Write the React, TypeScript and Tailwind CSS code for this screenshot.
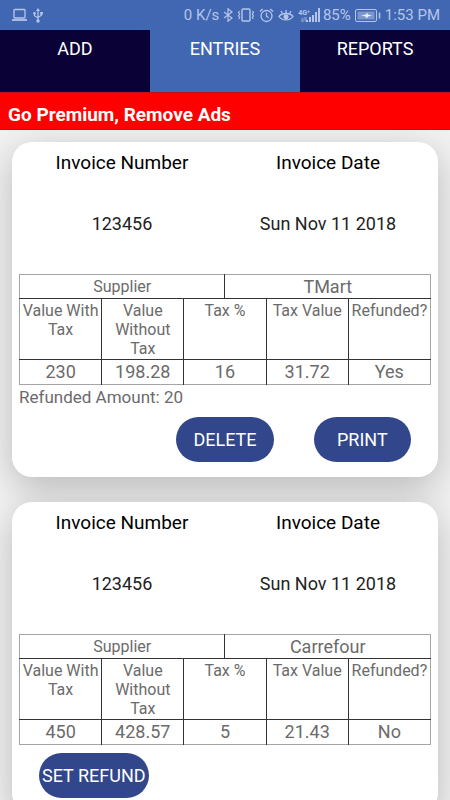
const invoices = [
  {
    number: "123456",
    date: "Sun Nov 11 2018",
    supplier: "TMart",
    withTax: "230",
    withoutTax: "198.28",
    tax: "16",
    taxValue: "31.72",
    refunded: true,
    refundAmount: "20",
  },
  {
    number: "123456",
    date: "Sun Nov 11 2018",
    supplier: "Carrefour",
    withTax: "450",
    withoutTax: "428.57",
    tax: "5",
    taxValue: "21.43",
    refunded: false,
    refundAmount: "",
  },
];

type Invoice = (typeof invoices)[number];

const StatusBar = () => {
  return (
    <div className="flex h-[30px] shrink-0 items-center justify-between bg-[#4267b2] pl-3 pr-2.5 text-[#b5c6ea]">
      <div className="flex items-center gap-1.5">
        <svg width="15" height="14" viewBox="0 0 15 14" fill="none" stroke="currentColor" strokeWidth="1.3">
          <rect x="2" y="1.5" width="11" height="8.5" rx="0.8" />
          <path d="M0 12h15" strokeWidth="1.8" />
        </svg>
        <svg width="10" height="15" viewBox="0 0 10 15" fill="none" stroke="currentColor" strokeWidth="1.2">
          <path d="M5 2v11M1.5 5.5v2.2L5 10M8.5 5v2.2L5 9.5" />
          <path d="M5 0L3 3h4z" fill="currentColor" stroke="none" />
          <circle cx="5" cy="13" r="1.7" fill="currentColor" stroke="none" />
          <circle cx="1.5" cy="5.3" r="1.3" fill="currentColor" stroke="none" />
          <path d="M7.2 4h2.6v2.6H7.2z" fill="currentColor" stroke="none" />
        </svg>
      </div>
      <div className="flex items-center text-[15px]">
        <span className="mr-1">0 K/s</span>
        <svg className="mr-1" width="10" height="14" viewBox="0 0 10 14" fill="none" stroke="currentColor" strokeWidth="1.2">
          <path d="M1 4l8 6-4 3.2V0.8L9 4l-8 6" />
        </svg>
        <svg className="mr-1" width="18" height="14" viewBox="0 0 18 14" fill="none" stroke="currentColor" strokeWidth="1.4">
          <rect x="5" y="1" width="8" height="12" rx="1" />
          <path d="M2.5 3l-1 1.5 1.2 1.5-1.2 2 1.2 1.5-1 1.5M15.5 3l1 1.5-1.2 1.5 1.2 2-1.2 1.5 1 1.5" strokeWidth="1.2" />
        </svg>
        <svg className="mr-1" width="15" height="15" viewBox="0 0 15 15" fill="none" stroke="currentColor" strokeWidth="1.3">
          <circle cx="7.5" cy="8" r="5.5" />
          <path d="M7.5 4.8v3.4l2.2 1.5M0.8 3.5l3-2.5M14.2 3.5l-3-2.5" />
        </svg>
        <svg className="mr-1" width="16" height="14" viewBox="0 0 16 14" fill="none" stroke="currentColor" strokeWidth="1.3">
          <path d="M1 8.5C4 4.5 12 4.5 15 8.5 12 13 4 13 1 8.5z" />
          <path d="M8 5V2M4.500 5.500L3 3M11.500 5.500L13 3" />
          <circle cx="8" cy="8.700" r="2.500" fill="currentColor" stroke="none" />
        </svg>
        <div className="flex flex-col items-center">
          <span className="text-[7px] font-bold leading-[8px]">4G⁺</span>
          <svg width="6" height="5" viewBox="0 0 6 5" fill="currentColor" opacity="0.4">
            <path d="M0 2l1.500-2L3 2v3H0zM3 0h3v3L4.500 5 3 3z" />
          </svg>
        </div>
        <svg className="-ml-1" width="15" height="14" viewBox="0 0 15 14" fill="currentColor">
          <path d="M0 12h2v2H0zM3 9h2v5H3zM6 7h2v7H6zM9 4h2v10H9zM12 0h2v14h-2z" />
        </svg>
        <span className="ml-0.5 mr-1">85%</span>
        <svg className="mr-1" width="26" height="13" viewBox="0 0 26 13" fill="none" stroke="currentColor">
          <rect x="0.5" y="0.5" width="21" height="12" rx="1.5" />
          <path d="M2.5 2.5h17v8h-17z" fill="currentColor" fillOpacity="0.5" stroke="none" />
          <path d="M6 6.500l5-1 1-2 1 2 4 1-4 1-1 2-1.500-2z" fill="#e8effc" stroke="none" />
          <path d="M24.500 3.500v6" strokeWidth="1.500" />
        </svg>
        <span>1:53 PM</span>
      </div>
    </div>
  );
};

const ActionButton = ({ label }: { label: string }) => {
  return (
    <div className="px-5">
      <button className="h-[45px] w-full min-w-fit whitespace-nowrap rounded-full bg-[#32478b] px-[3px] text-lg text-white">
        {label}
      </button>
    </div>
  );
};

const InvoiceCard = ({ invoice }: { invoice: Invoice }) => {
  return (
    <div className="rounded-[20px] bg-white px-[7px] pb-[15px] shadow-[0_10px_36px_rgba(0,0,0,0.24)]">
      <div className="grid grid-cols-2 pt-[9px] text-center">
        <p className="text-[19px] leading-6 text-black">Invoice Number</p>
        <p className="text-[19px] leading-6 text-black">Invoice Date</p>
        <p className="pb-[38px] pt-[37px] text-lg leading-6 text-[#222]">{invoice.number}</p>
        <p className="pb-[38px] pt-[37px] text-lg leading-6 text-[#222]">{invoice.date}</p>
      </div>
      <table className="w-full table-fixed border-collapse border border-[#a5a5a5] text-center text-[#6b6b6b]">
        <colgroup>
          <col span={10} />
        </colgroup>
        <tbody>
          <tr className="h-6">
            <th colSpan={5} className="p-0 text-base font-normal leading-5">
              Supplier
            </th>
            <td colSpan={5} className="border-l border-[#333] p-0 text-lg leading-5">
              {invoice.supplier}
            </td>
          </tr>
          <tr className="h-[61px] border-t border-[#333] align-top text-base leading-[19px]">
            <th colSpan={2} className="p-0 pt-0.5 font-normal">Value With Tax</th>
            <th colSpan={2} className="border-l border-[#333] p-0 pt-0.5 font-normal">
              Value Without Tax
            </th>
            <th colSpan={2} className="border-l border-[#333] p-0 pt-0.5 font-normal">Tax %</th>
            <th colSpan={2} className="border-l border-[#333] p-0 pt-0.5 font-normal">Tax Value</th>
            <th colSpan={2} className="border-l border-[#333] p-0 pt-0.5 font-normal">Refunded?</th>
          </tr>
          <tr className="h-[25px] border-t border-[#333] text-lg leading-5">
            <td colSpan={2} className="p-0">{invoice.withTax}</td>
            <td colSpan={2} className="border-l border-[#333] p-0">{invoice.withoutTax}</td>
            <td colSpan={2} className="border-l border-[#333] p-0">{invoice.tax}</td>
            <td colSpan={2} className="border-l border-[#333] p-0">{invoice.taxValue}</td>
            <td colSpan={2} className="border-l border-[#333] p-0">
              {invoice.refunded ? "Yes" : "No"}
            </td>
          </tr>
        </tbody>
      </table>
      {invoice.refunded && (
        <p className="text-[17px] leading-6 text-[#6b6b6b]">Refunded Amount: {invoice.refundAmount}</p>
      )}
      <div className="grid grid-cols-3 pt-2">
        {invoice.refunded ? (
          <>
            <span />
            <ActionButton label="DELETE" />
            <ActionButton label="PRINT" />
          </>
        ) : (
          <ActionButton label="SET REFUND" />
        )}
      </div>
    </div>
  );
};

const App = () => {
  return (
    <div className="flex h-screen flex-col overflow-hidden bg-[#f2f2f2] font-[Roboto,sans-serif]">
      <StatusBar />
      <nav className="grid h-[62px] shrink-0 grid-cols-3 bg-[#0a0236] text-center text-lg leading-6 text-white">
        <a href="#add" className="pt-[7px]">ADD</a>
        <a href="#entries" className="bg-[#4267b2] pt-[7px]">ENTRIES</a>
        <a href="#reports" className="pt-[7px]">REPORTS</a>
      </nav>
      <a
        href="#premium"
        className="flex h-[38px] shrink-0 items-center border-y border-[#c01020] bg-[#ff0000] px-2 pt-2 text-[19px] font-bold text-white"
      >
        Go Premium, Remove Ads
      </a>
      <main className="flex min-h-0 flex-1 flex-col gap-[25px] overflow-y-auto px-3 pt-3 [scrollbar-width:none]">
        {invoices.map((invoice, i) => (
          <InvoiceCard key={i} invoice={invoice} />
        ))}
      </main>
    </div>
  );
};

export default App;
